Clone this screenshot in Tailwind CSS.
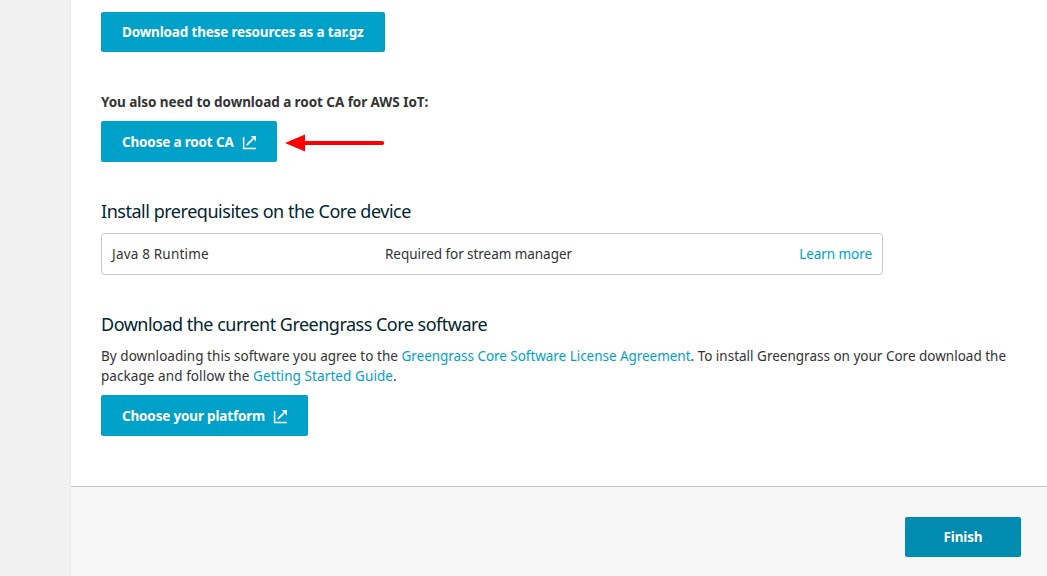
<!DOCTYPE html>
<html lang="en">
<head>
<meta charset="utf-8">
<title>Greengrass Core setup</title>
<script src="https://cdn.jsdelivr.net/npm/@tailwindcss/browser@4"></script>
</head>
<body class="flex h-[576px] overflow-hidden bg-white font-['Noto_Sans',sans-serif] text-[13.5px] leading-5 text-[#333]">
<aside class="w-[71px] shrink-0 border-r border-[#eaeaea] bg-[#f1f1f1]"></aside>
<div class="flex min-w-0 flex-1 flex-col">
  <main class="flex h-[486px] shrink-0 flex-col items-start pt-3 pl-[30px]">
    <button class="h-10 w-[284px] rounded-[2px] bg-[#00a1c9] pl-[21px] text-left font-bold tracking-[-0.17px] text-white">Download these resources as a tar.gz</button>
    <p class="mt-10 font-bold tracking-[-0.06px] whitespace-nowrap">You also need to download a root CA for AWS IoT:</p>
    <div class="mt-[9px] flex items-center">
      <button class="flex h-[41px] w-44 items-center rounded-[2px] bg-[#00a1c9] pl-[21px] font-bold tracking-[-0.17px] text-white">
        <span class="w-[119px] text-left whitespace-nowrap">Choose a root CA</span>
        <svg class="mt-0.5 h-[15px] w-[16px]" viewBox="0 0 16 15" fill="none" stroke="#fff"><path d="M2.6 2v11.4H15" stroke-width="1.5"/><path d="M5.7 10.2L12 3.9" stroke-width="1.8"/><path d="M9.6 1H15V6.4Z" fill="#fff" stroke="none"/></svg>
      </button>
      <svg class="mt-[3px] ml-2 h-[18px] w-[100px]" viewBox="0 0 100 18"><path d="M18 9H97.2" stroke="#f00" stroke-width="4" stroke-linecap="round"/><path d="M0 9L20 .5V17.5Z" fill="#f00"/></svg>
    </div>
    <h2 class="mt-[37px] text-[18px] leading-6 tracking-[-0.47px] whitespace-nowrap text-[#00252e]">Install prerequisites on the Core device</h2>
    <div class="mt-[10px] flex h-[42px] w-[782px] items-center rounded-[4px] border border-[#c8c8c8] px-[10px] whitespace-nowrap">
      <span class="w-[273px] tracking-[0.19px]">Java 8 Runtime</span>
      <span class="flex-1 tracking-[-0.05px]">Required for stream manager</span>
      <a class="tracking-[-0.06px] text-[#00a1c9]">Learn more</a>
    </div>
    <h2 class="mt-[37px] text-[18px] leading-6 tracking-[-0.51px] whitespace-nowrap text-[#00252e]">Download the current Greengrass Core software</h2>
    <p class="mt-[10px] whitespace-nowrap"><span class="tracking-[0.04px]">By downloading this software you agree to the </span><a class="tracking-[-0.04px] text-[#00a1c9]">Greengrass Core Software License Agreement</a>. To install Greengrass on your Core download the<br><span class="tracking-[0.07px]">package and follow the </span><a class="tracking-[0.09px] text-[#00a1c9]">Getting Started Guide</a>.</p>
    <button class="mt-[9px] flex h-[41px] w-[207px] items-center rounded-[2px] bg-[#00a1c9] pl-[21px] font-bold tracking-[-0.17px] text-white">
      <span class="w-[150px] text-left whitespace-nowrap">Choose your platform</span>
      <svg class="mt-0.5 h-[15px] w-[16px]" viewBox="0 0 16 15" fill="none" stroke="#fff"><path d="M2.6 2v11.4H15" stroke-width="1.5"/><path d="M5.7 10.2L12 3.9" stroke-width="1.8"/><path d="M9.6 1H15V6.4Z" fill="#fff" stroke="none"/></svg>
    </button>
  </main>
  <footer class="flex flex-1 items-start justify-end border-t border-[#c8c8c8] bg-[#f6f6f6] pt-[30px] pr-[26px]">
    <button class="h-10 w-[116px] rounded-[2px] bg-[#008bb0] font-bold tracking-[-0.17px] text-white">Finish</button>
  </footer>
</div>
</body>
</html>
